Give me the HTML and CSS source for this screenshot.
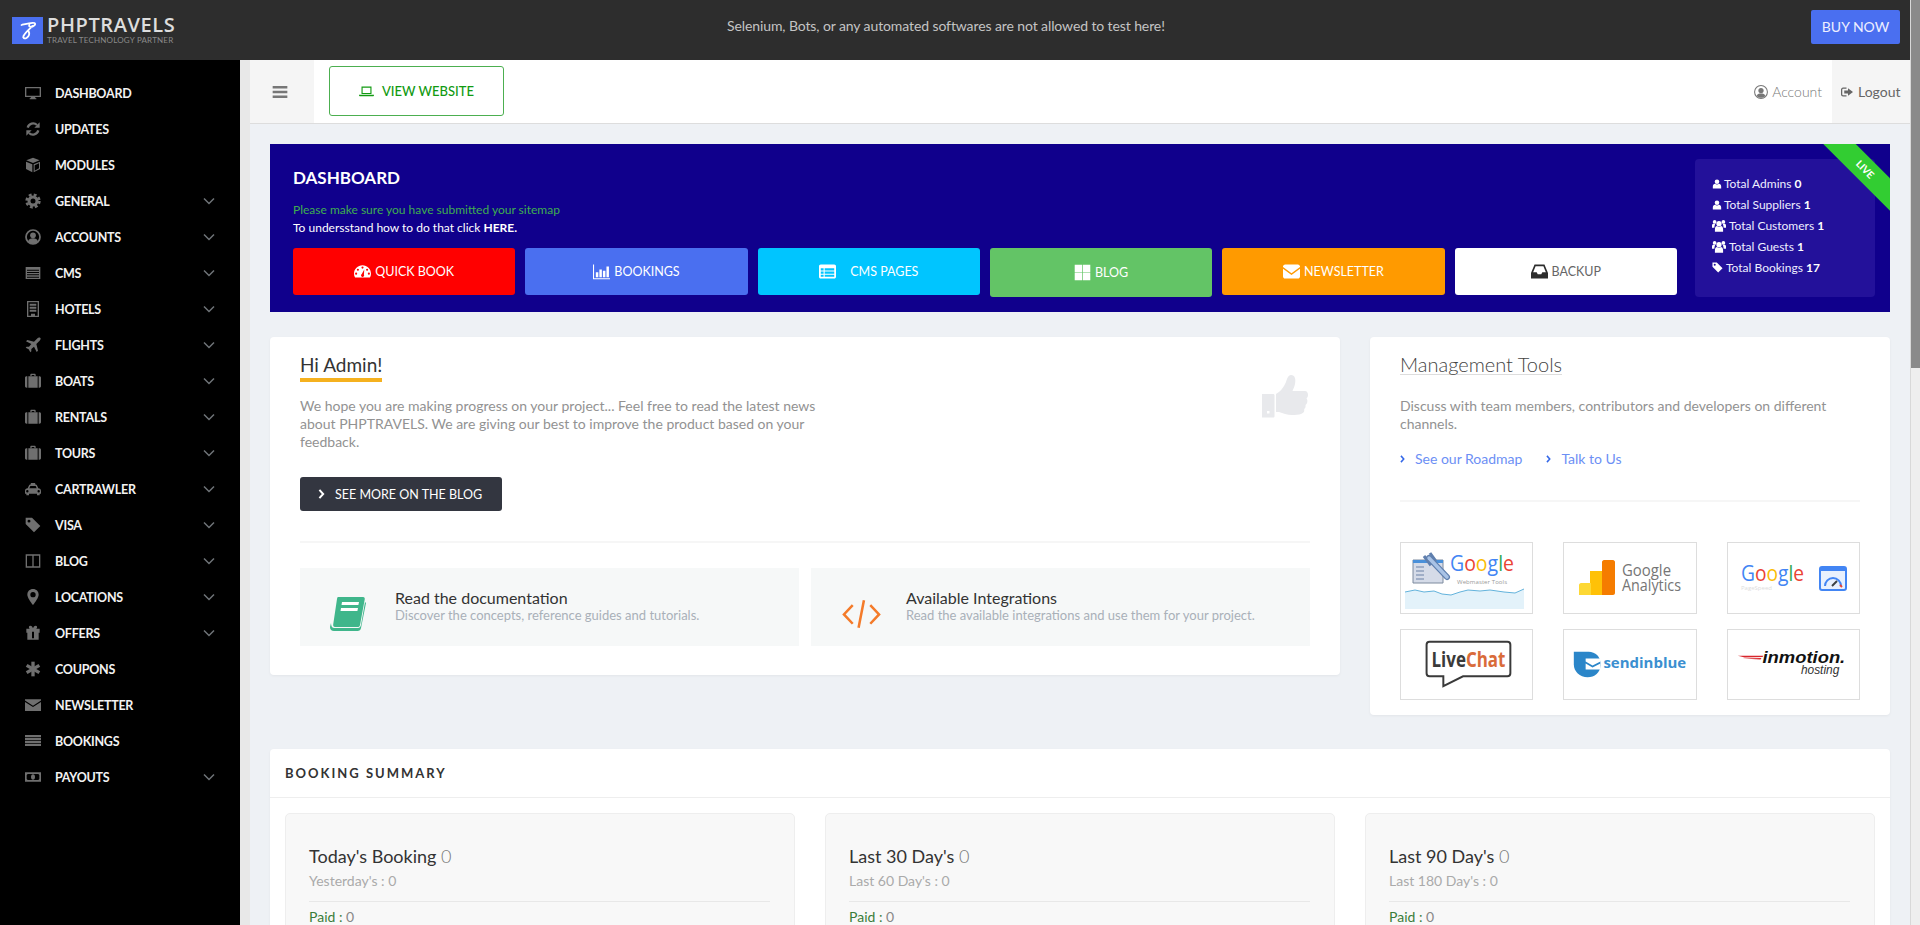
FILE: index.html
```html
<!DOCTYPE html>
<html lang="en">
<head>
    <meta charset="UTF-8">
    <title>Dashboard</title>
    <link rel="stylesheet" href="styles.css">
</head>
<body>
<svg class="sprite" xmlns="http://www.w3.org/2000/svg">
    <symbol id="i-desktop" viewBox="0 0 24 24"><path fill-rule="evenodd" d="M0 3h24v15H0zM2 5v11h20V5z"/><path d="M9 18h6l1 2H8zM7 20h10v1.500H7z"/></symbol>
    <symbol id="i-refresh" viewBox="0 0 24 24"><path fill="none" stroke="currentColor" stroke-width="3.400" d="M4 10a8.500 8.500 0 0 1 14-4M20 14a8.500 8.500 0 0 1-14 4"/><path d="M22 2v8h-8zM2 22v-8h8z"/></symbol>
    <symbol id="i-cube" viewBox="0 0 24 24"><path d="M12 1l10 4-10 4L2 5zM1.500 7l9.500 4v12l-9.500-5zM22.500 7v11L13 23V11z"/><path d="M14.500 12.500l6.500-3v7.500l-6.500 3.500z" fill="#000"/></symbol>
    <symbol id="i-cog" viewBox="0 0 24 24"><circle cx="12" cy="12" r="9.500" fill="none" stroke="currentColor" stroke-width="4" stroke-dasharray="4.200 3.260"/><circle cx="12" cy="12" r="6" fill="none" stroke="currentColor" stroke-width="4.500"/></symbol>
    <symbol id="i-user-circle" viewBox="0 0 24 24"><circle cx="12" cy="12" r="10.500" fill="none" stroke="currentColor" stroke-width="2.600"/><circle cx="12" cy="9.500" r="4.300"/><path d="M4.500 19c1-4 3.500-5 7.500-5s6.500 1 7.500 5c-2 2-4.500 3.300-7.500 3.300S6.500 21 4.500 19z"/></symbol>
    <symbol id="i-list-alt" viewBox="0 0 24 24"><path d="M1 3h22v18H1z"/><path fill="#000" d="M3 7h18v1.500H3zM3 10.500h18V12H3zM3 14h18v1.500H3zM3 17.500h18V19H3z"/></symbol>
    <symbol id="i-building" viewBox="0 0 24 24"><path fill-rule="evenodd" d="M3 0h18v24H3zM5 2v20h4v-3h6v3h4V2z"/><path d="M7 4h10v3H7zM7 8.500h10v3H7zM7 13h10v3H7z"/></symbol>
    <symbol id="i-plane" viewBox="0 0 24 24"><path d="M23 1.500c-1.200-1.200-3.500-.4-5 1.100L13.500 7 3.500 4.500 1.500 6.500 9.500 10.500 6 14.500H2.500L1 16l4.500 2.500L8 23l1.500-1.500V18l4-3.500 4 8 2-2-2.500-10 4.500-4.500c1.500-1.500 2.700-3.300 1.500-4.500z"/></symbol>
    <symbol id="i-suitcase" viewBox="0 0 24 24"><path fill-rule="evenodd" d="M8 5V2.500C8 1.700 8.700 1 9.500 1h5c.8 0 1.500.7 1.500 1.500V5h-2V3h-4v2z"/><path d="M5 5h14v17H5zM0 7c0-1 1-2 2.500-2H3.500v17H2.500C1 22 0 21 0 20zM24 7c0-1-1-2-2.500-2h-1v17h1c1.500 0 2.500-1 2.500-2z"/></symbol>
    <symbol id="i-taxi" viewBox="0 0 24 24"><path fill-rule="evenodd" d="M9 3h6l1 2.500h1.500L20 11c2.500.5 4 1.500 4 4v4h-2v2.500h-4V19H6v2.500H2V19H0v-4c0-2.500 1.500-3.500 4-4l2.500-5.500H8zM8 7.500L6.500 11h11L16 7.500zM3.500 13.500a1.800 1.800 0 1 0 0 3.600 1.800 1.800 0 0 0 0-3.600zM20.500 13.500a1.800 1.800 0 1 0 0 3.600 1.800 1.800 0 0 0 0-3.600z"/></symbol>
    <symbol id="i-tag" viewBox="0 0 24 24"><path fill-rule="evenodd" d="M1 1h9.500L23 13.500 13.500 23 1 10.500zM6 4a2.200 2.200 0 1 0 0 4.400A2.200 2.200 0 0 0 6 4z"/></symbol>
    <symbol id="i-columns" viewBox="0 0 24 24"><path fill-rule="evenodd" d="M1 2h22v20H1zM3 4v16h8V4zM13 4v16h8V4z"/></symbol>
    <symbol id="i-marker" viewBox="0 0 24 24"><path fill-rule="evenodd" d="M12 0c5 0 8.500 3.500 8.500 8.500 0 4-5 11-8.500 15.500C8.500 19.500 3.500 12.500 3.500 8.500 3.500 3.500 7 0 12 0zm0 4.500a4 4 0 1 0 0 8 4 4 0 0 0 0-8z"/></symbol>
    <symbol id="i-gift" viewBox="0 0 24 24"><path fill-rule="evenodd" d="M8 1c2 0 3.500 2 4 4 .5-2 2-4 4-4 2.500 0 3 3 1 4.500h5v6h-1.500V22H3.500V11.500H2v-6h5C5 4 5.500 1 8 1zm2.500 9v10h3V10z"/></symbol>
    <symbol id="i-asterisk" viewBox="0 0 24 24"><path d="M9.500 1h5v22h-5z"/><path d="M9.500 1h5v22h-5z" transform="rotate(60 12 12)"/><path d="M9.500 1h5v22h-5z" transform="rotate(120 12 12)"/></symbol>
    <symbol id="i-envelope" viewBox="0 0 24 24"><path d="M0 3.500h24v1.800L12 13 0 5.300zM0 7.500l12 7.500 12-7.500V21H0z"/></symbol>
    <symbol id="i-list" viewBox="0 0 24 24"><path d="M0 3h24v3.200H0zM0 7.400h24v3.200H0zM0 11.800h24V15H0zM0 16.200h24v3.200H0z"/></symbol>
    <symbol id="i-money" viewBox="0 0 24 24"><path fill-rule="evenodd" d="M0 5h24v14H0zM4 7.500L2.500 9v6L4 16.500h16L21.500 15V9L20 7.500z"/><path d="M12 8c2 0 3 1.800 3 4s-1 4-3 4-3-1.800-3-4 1-4 3-4z"/></symbol>
    <symbol id="i-chevron-down" viewBox="0 0 12 8"><path fill="none" stroke="currentColor" stroke-width="1.500" d="M1 1.500l5 5 5-5"/></symbol>
    <symbol id="i-chevron-right" viewBox="0 0 8 12"><path fill="none" stroke="currentColor" stroke-width="2.400" d="M1.500 1l4.500 5-4.500 5"/></symbol>
    <symbol id="i-bars" viewBox="0 0 24 24"><path d="M1 3h22v3.600H1zM1 10.200h22v3.600H1zM1 17.400h22V21H1z"/></symbol>
    <symbol id="i-laptop" viewBox="0 0 24 24"><path fill-rule="evenodd" d="M4 4h16v12H4zM5.800 5.800v8.400h12.400V5.800z"/><path d="M0 17h24v1.500l-1 1H1l-1-1z"/></symbol>
    <symbol id="i-dashboard" viewBox="0 0 24 24"><path fill-rule="evenodd" d="M12 3c6.600 0 12 5 12 12 0 2-.5 4-1.500 5.500h-21C.5 19 0 17 0 15 0 8 5.400 3 12 3zM12 5a1.500 1.500 0 1 0 0 3 1.500 1.500 0 0 0 0-3zM5.500 8a1.500 1.500 0 1 0 0 3 1.500 1.500 0 0 0 0-3zM18.500 8a1.500 1.500 0 1 0 0 3 1.500 1.500 0 0 0 0-3zM3 13.500a1.500 1.500 0 1 0 0 3 1.500 1.500 0 0 0 0-3zM21 13.500a1.500 1.500 0 1 0 0 3 1.500 1.500 0 0 0 0-3zM14.500 9L11 15.500a2.200 2.200 0 1 0 3 .8z"/></symbol>
    <symbol id="i-chart" viewBox="0 0 24 24"><path d="M0 2h1.500v19.500H24V23H0zM4 13h3.500v7H4zM9 9h3.500v11H9zM14 11h3.500v9H14zM19 5h3.500v15H19z"/></symbol>
    <symbol id="i-table" viewBox="0 0 24 24"><path fill-rule="evenodd" d="M2.500 2h19C23 2 24 3 24 4.500v15c0 1.500-1 2.500-2.500 2.500h-19C1 22 0 21 0 19.500v-15C0 3 1 2 2.500 2zM2.500 7.500v3h4v-3zM8 7.500v3h13.500v-3zM2.500 12v3h4v-3zM8 12v3h13.500v-3zM2.500 16.500v3h4v-3zM8 16.500v3h13.500v-3z"/></symbol>
    <symbol id="i-grid" viewBox="0 0 24 24"><path d="M1 1h10.500v10.500H1zM12.500 1H23v10.500H12.500zM1 12.500h10.500V23H1zM12.500 12.500H23V23H12.500z"/></symbol>
    <symbol id="i-mail-box" viewBox="0 0 24 24"><path d="M3 2h18c1.500 0 3 1.500 3 3v.5l-12 9-12-9V5c0-1.500 1.500-3 3-3zM0 8l12 9 12-9v11c0 1.500-1.500 3-3 3H3c-1.500 0-3-1.500-3-3z"/></symbol>
    <symbol id="i-inbox" viewBox="0 0 24 24"><path fill-rule="evenodd" d="M5 2h14l5 12v8H0v-8zM6.500 4.500L3 13h5l1.500 3h5L16 13h5l-3.500-8.500z"/></symbol>
    <symbol id="i-user" viewBox="0 0 24 24"><circle cx="12" cy="6.500" r="5.500"/><path d="M2 23v-5c0-4 2.500-6.500 5.500-6.500 1 1 2.700 1.800 4.500 1.800s3.500-.8 4.500-1.800c3 0 5.500 2.500 5.500 6.500v5z"/></symbol>
    <symbol id="i-users" viewBox="0 0 24 24"><circle cx="12" cy="8" r="4.500"/><circle cx="4.500" cy="5" r="3.200"/><circle cx="19.500" cy="5" r="3.200"/><path d="M5 22v-5c0-3 2-5 3.500-5 1 .8 2.200 1.300 3.500 1.300s2.500-.5 3.500-1.300c1.500 0 3.500 2 3.500 5v5zM0 15v-4c0-1.500 1-3 2-3 1 .6 2 .8 3.500.6C5 10 4.500 11 4 15zM24 15v-4c0-1.500-1-3-2-3-1 .6-2 .8-3.500.6.500 1.400 1 2.400 1.500 6.400z"/></symbol>
    <symbol id="i-sign-out" viewBox="0 0 24 24"><path d="M4 3h7v2.500H4.500c-1 0-2 1-2 2v9c0 1 1 2 2 2H11V21H4c-2 0-4-2-4-4V7c0-2 2-4 4-4z"/><path d="M14 4.500L24 12l-10 7.500V15H6.500V9H14z"/></symbol>
    <symbol id="i-user-o" viewBox="0 0 24 24"><circle cx="12" cy="12" r="11" fill="none" stroke="currentColor" stroke-width="1.800"/><circle cx="12" cy="9.500" r="4.500"/><path d="M4.500 19c1-3.500 3.500-4.500 7.500-4.500s6.500 1 7.500 4.500c-2 2-4.500 3-7.500 3s-5.500-1-7.500-3z"/></symbol>
    <symbol id="i-thumb" viewBox="0 0 46 44"><path d="M0 19h11c1 0 1.500.5 1.500 1.500V41c0 1-.5 1.500-1.500 1.500H0z"/><path fill="#fff" d="M5 36h2.500v2.500H5z"/><path d="M14 19c4-2 8-7 10-12 1-3 2-7 5-7 4 0 5 4 4 9-.5 3-2 5-2.500 7H43c2 0 3 2 3 4s-1 3-1.500 3.500c.8 1 1 2 .8 3.500-.2 1.500-1 2.300-1.800 3 .3 1.500 0 3-1.300 4 .3 2-.2 4-3.200 5-2 .7-6 1-9 1-5 0-9-1.500-13-3H14z"/></symbol>
</svg>

<div class="screen">
    <div class="window">
        <div class="topbar">
            <div class="brand">
                <div class="brand-mark">
                    <svg viewBox="0 0 30 27"><path fill="none" stroke="#fff" stroke-width="1.800" stroke-linecap="round" d="M9 8c4-1 10-3 13-2 2 1-1 4-4 4-1 0-2-1-1-2M20 9c-2 2-7 6-9 10-1 2 1 3 3 2 3-2 3-5 2-7"/></svg>
                </div>
                <div class="brand-text">
                    <div class="brand-name">PHPTRAVELS</div>
                    <div class="brand-sub">TRAVEL TECHNOLOGY PARTNER</div>
                </div>
            </div>
            <div class="notice">Selenium, Bots, or any automated softwares are not allowed to test here!</div>
            <a class="buy-btn">BUY NOW</a>
        </div>

        <div class="layout">
            <ul class="sidebar">
                <li><svg class="side-ico"><use href="#i-desktop"/></svg><span>DASHBOARD</span></li>
                <li><svg class="side-ico"><use href="#i-refresh"/></svg><span>UPDATES</span></li>
                <li><svg class="side-ico"><use href="#i-cube"/></svg><span>MODULES</span></li>
                <li><svg class="side-ico"><use href="#i-cog"/></svg><span>GENERAL</span><svg class="side-arrow"><use href="#i-chevron-down"/></svg></li>
                <li><svg class="side-ico"><use href="#i-user-circle"/></svg><span>ACCOUNTS</span><svg class="side-arrow"><use href="#i-chevron-down"/></svg></li>
                <li><svg class="side-ico"><use href="#i-list-alt"/></svg><span>CMS</span><svg class="side-arrow"><use href="#i-chevron-down"/></svg></li>
                <li><svg class="side-ico"><use href="#i-building"/></svg><span>HOTELS</span><svg class="side-arrow"><use href="#i-chevron-down"/></svg></li>
                <li><svg class="side-ico"><use href="#i-plane"/></svg><span>FLIGHTS</span><svg class="side-arrow"><use href="#i-chevron-down"/></svg></li>
                <li><svg class="side-ico"><use href="#i-suitcase"/></svg><span>BOATS</span><svg class="side-arrow"><use href="#i-chevron-down"/></svg></li>
                <li><svg class="side-ico"><use href="#i-suitcase"/></svg><span>RENTALS</span><svg class="side-arrow"><use href="#i-chevron-down"/></svg></li>
                <li><svg class="side-ico"><use href="#i-suitcase"/></svg><span>TOURS</span><svg class="side-arrow"><use href="#i-chevron-down"/></svg></li>
                <li><svg class="side-ico"><use href="#i-taxi"/></svg><span>CARTRAWLER</span><svg class="side-arrow"><use href="#i-chevron-down"/></svg></li>
                <li><svg class="side-ico"><use href="#i-tag"/></svg><span>VISA</span><svg class="side-arrow"><use href="#i-chevron-down"/></svg></li>
                <li><svg class="side-ico"><use href="#i-columns"/></svg><span>BLOG</span><svg class="side-arrow"><use href="#i-chevron-down"/></svg></li>
                <li><svg class="side-ico"><use href="#i-marker"/></svg><span>LOCATIONS</span><svg class="side-arrow"><use href="#i-chevron-down"/></svg></li>
                <li><svg class="side-ico"><use href="#i-gift"/></svg><span>OFFERS</span><svg class="side-arrow"><use href="#i-chevron-down"/></svg></li>
                <li><svg class="side-ico"><use href="#i-asterisk"/></svg><span>COUPONS</span></li>
                <li><svg class="side-ico"><use href="#i-envelope"/></svg><span>NEWSLETTER</span></li>
                <li><svg class="side-ico"><use href="#i-list"/></svg><span>BOOKINGS</span></li>
                <li><svg class="side-ico"><use href="#i-money"/></svg><span>PAYOUTS</span><svg class="side-arrow"><use href="#i-chevron-down"/></svg></li>
            </ul>

            <div class="main">
                <div class="header">
                    <a class="toggle"><svg><use href="#i-bars"/></svg></a>
                    <a class="view-btn"><svg><use href="#i-laptop"/></svg>VIEW WEBSITE</a>
                    <a class="account"><svg><use href="#i-user-o"/></svg>Account</a>
                    <a class="logout"><svg><use href="#i-sign-out"/></svg>Logout</a>
                </div>

                <div class="content">
                    <div class="banner">
                        <div class="banner-left">
                            <h2>DASHBOARD</h2>
                            <p class="sitemap">Please make sure you have submitted your sitemap</p>
                            <p class="sitemap-how">To undersstand how to do that click <b>HERE.</b></p>
                            <div class="quick">
                                <a class="quick-btn red"><svg><use href="#i-dashboard"/></svg>QUICK BOOK</a>
                                <a class="quick-btn blue"><svg><use href="#i-chart"/></svg>BOOKINGS</a>
                                <a class="quick-btn cyan"><svg class="wide"><use href="#i-table"/></svg>CMS PAGES</a>
                                <a class="quick-btn green"><svg><use href="#i-grid"/></svg>BLOG</a>
                                <a class="quick-btn orange"><svg><use href="#i-mail-box"/></svg>NEWSLETTER</a>
                                <a class="quick-btn white"><svg><use href="#i-inbox"/></svg>BACKUP</a>
                            </div>
                        </div>
                        <div class="totals">
                            <div><svg><use href="#i-user"/></svg>Total Admins <b>0</b></div>
                            <div><svg><use href="#i-user"/></svg>Total Suppliers <b>1</b></div>
                            <div><svg class="wide"><use href="#i-users"/></svg>Total Customers <b>1</b></div>
                            <div><svg class="wide"><use href="#i-users"/></svg>Total Guests <b>1</b></div>
                            <div><svg class="tag"><use href="#i-tag"/></svg>Total Bookings <b>17</b></div>
                        </div>
                        <div class="ribbon"><span>LIVE</span></div>
                    </div>

                    <div class="cards">
                        <div class="card hello">
                            <div class="hello-top">
                                <div>
                                    <h3 class="hello-title">Hi Admin!</h3>
                                    <p class="muted">We hope you are making progress on your project... Feel free to read the latest news<br>about PHPTRAVELS. We are giving our best to improve the product based on your<br>feedback.</p>
                                    <a class="blog-btn"><svg><use href="#i-chevron-right"/></svg>SEE MORE ON THE BLOG</a>
                                </div>
                                <svg class="thumb"><use href="#i-thumb"/></svg>
                            </div>
                            <div class="rule hello-rule"></div>
                            <div class="docs">
                                <div class="doc">
                                    <svg class="doc-ico" viewBox="0 0 36 34"><path fill="#3fb68b" d="M8 0h25c1.500 0 2 1 1.700 2.500L30 28c-.3 1.500-1 2-2.500 2H5c-1.500 0-2-1-1.800-2.500L7 2c.2-1.300.5-2 1-2z"/><path fill="#3fb68b" d="M35 5l1 1-5 25c-.3 1.800-1.500 3-3.500 3H4c-2.500 0-4-1.500-4-4l1-4c0 3 1 5 3.500 5H28c1.500 0 2.500-1 3-3z"/><path fill="#fff" d="M12 5h17l-.6 3H11.500zM11 11h17l-.6 3H10.500z"/></svg>
                                    <div class="doc-text">
                                        <div class="doc-title">Read the documentation</div>
                                        <div class="doc-sub">Discover the concepts, reference guides and tutorials.</div>
                                    </div>
                                </div>
                                <div class="doc">
                                    <svg class="doc-ico code" viewBox="0 0 40 30"><path fill="none" stroke="#f47b2a" stroke-width="2.600" d="M11 6L2 15.500 11 25M29 6l9 9.500L29 25M22.500 1L17 29"/></svg>
                                    <div class="doc-text">
                                        <div class="doc-title">Available Integrations</div>
                                        <div class="doc-sub">Read the available integrations and use them for your project.</div>
                                    </div>
                                </div>
                            </div>
                        </div>

                        <div class="card tools">
                            <h3 class="tools-title">Management Tools</h3>
                            <p class="muted">Discuss with team members, contributors and developers on different channels.</p>
                            <div class="tool-links">
                                <a><svg><use href="#i-chevron-right"/></svg>See our Roadmap</a>
                                <a><svg><use href="#i-chevron-right"/></svg>Talk to Us</a>
                            </div>
                            <div class="rule tools-rule"></div>
                            <div class="logos">
                                <div class="logo">
                                    <svg viewBox="0 0 131 70">
                                        <path fill="#e3f2fa" d="M4 49l10-2 9 2 10-1 8 3 9 1 9-3 8-2 12 1 10-1 14 2 11 1 9-4 V66 H4z"/>
                                        <path fill="none" stroke="#63b3dc" d="M4 49l10-2 9 2 10-1 8 3 9 1 9-3 8-2 12 1 10-1 14 2 11 1 9-4"/>
                                        <path fill="#d5dbe8" stroke="#7c8a9e" d="M12 17h30v23H12z"/>
                                        <path fill="#4a90d9" d="M12 17h30v3H12z"/>
                                        <path fill="none" stroke="#8fa0bc" stroke-width="1.500" d="M15 24h8M15 28h8M15 32h8M15 36h8"/>
                                        <path fill="none" stroke="#5f7fae" stroke-width="6" stroke-linecap="round" d="M28 15L46 34"/>
                                        <path fill="none" stroke="#5f7fae" stroke-width="3" d="M23 13l6 8 5-4-5-7"/>
                                        <path fill="none" stroke="#a9c3e6" stroke-width="3.500" stroke-linecap="round" d="M28 15L46 34"/>
                                        <text class="g-text" x="49" y="28" font-size="21" textLength="64" lengthAdjust="spacingAndGlyphs"><tspan fill="#4285f4">G</tspan><tspan fill="#ea4335">o</tspan><tspan fill="#fbbc05">o</tspan><tspan fill="#4285f4">g</tspan><tspan fill="#34a853">l</tspan><tspan fill="#ea4335">e</tspan></text>
                                        <text class="g-text" x="56" y="41" font-size="6" fill="#999" textLength="50">Webmaster Tools</text>
                                    </svg>
                                </div>
                                <div class="logo">
                                    <svg viewBox="0 0 132 70">
                                        <path fill="#ffc107" d="M26 28h14v24H26z"/>
                                        <path fill="#fdd835" d="M17 40h10v12H15V42c0-1 1-2 2-2z"/>
                                        <path fill="#f57c00" d="M38 19c0-1 1-2 2-2h9c1 0 2 1 2 2v31c0 1-1 2-2 2H38z"/>
                                        <text class="g-text" x="58" y="33" font-size="16" fill="#757575" textLength="49" lengthAdjust="spacingAndGlyphs">Google</text>
                                        <text class="g-text" x="58" y="48" font-size="16" fill="#757575" textLength="59" lengthAdjust="spacingAndGlyphs">Analytics</text>
                                    </svg>
                                </div>
                                <div class="logo">
                                    <svg viewBox="0 0 131 70">
                                        <text class="g-text" x="13" y="38" font-size="22" textLength="63" lengthAdjust="spacingAndGlyphs"><tspan fill="#4285f4">G</tspan><tspan fill="#ea4335">o</tspan><tspan fill="#fbbc05">o</tspan><tspan fill="#4285f4">g</tspan><tspan fill="#34a853">l</tspan><tspan fill="#ea4335">e</tspan></text>
                                        <text class="g-text" x="13" y="47" font-size="6" fill="#ddd">PageSpeed</text>
                                        <rect x="92" y="24" width="26" height="23" rx="2" fill="#e8f0fd" stroke="#4285f4" stroke-width="2"/>
                                        <path fill="#4285f4" d="M92 24h26v4H92z"/>
                                        <path fill="none" stroke="#4285f4" stroke-width="2" d="M97 43a8 8 0 0 1 16 0"/>
                                        <path stroke="#ea4335" stroke-width="2" d="M112 42l2 2"/>
                                        <path stroke="#3c4043" stroke-width="2" d="M104 43l5-5"/>
                                    </svg>
                                </div>
                                <div class="logo">
                                    <svg viewBox="0 0 131 70">
                                        <path fill="#fff" stroke="#3a3a3a" stroke-width="2" d="M28 12h79c2 0 3 1 3 3v29c0 2-1 3-3 3H62l-20 10v-10H28c-2 0-3-1-3-3V15c0-2 1-3 3-3z"/>
                                        <text class="lc-text" x="30" y="38" font-size="22" fill="#3a3a3a" textLength="75" lengthAdjust="spacingAndGlyphs">Live<tspan fill="#d96b3a">Chat</tspan></text>
                                    </svg>
                                </div>
                                <div class="logo">
                                    <svg viewBox="0 0 132 70">
                                        <path fill="#2b86c9" d="M9 22h15c7 0 12 5 12 12v2c0 7-6 12-13 12-8 0-14-6-14-13z"/>
                                        <path fill="#fff" d="M21 29h15v3l-8 4-7-4zM21 34l7 4 8-4v6H21z"/>
                                        <text class="sb-text" x="39" y="39" font-size="15" fill="#3b8fd0" textLength="84" lengthAdjust="spacingAndGlyphs">sendinblue</text>
                                    </svg>
                                </div>
                                <div class="logo">
                                    <svg viewBox="0 0 131 70">
                                        <path fill="#d8262c" d="M9 26h26l-1 1.500 -18 .5zM14 29l19-.5-1 1.500z"/>
                                        <text class="im-text" x="34" y="33" font-size="17" fill="#111" textLength="84" lengthAdjust="spacingAndGlyphs">inmotion.</text>
                                        <text class="im-sub" x="73" y="45" font-size="13" fill="#333" textLength="39" lengthAdjust="spacingAndGlyphs">hosting</text>
                                    </svg>
                                </div>
                            </div>
                        </div>
                    </div>

                    <div class="card summary">
                        <div class="summary-head">BOOKING SUMMARY</div>
                        <div class="summary-grid">
                            <div class="stat">
                                <div class="stat-title">Today's Booking <span>0</span></div>
                                <div class="stat-sub">Yesterday's : 0</div>
                                <div class="stat-rule"></div>
                                <div class="stat-row"><b>Paid :</b> 0</div>
                            </div>
                            <div class="stat">
                                <div class="stat-title">Last 30 Day's <span>0</span></div>
                                <div class="stat-sub">Last 60 Day's : 0</div>
                                <div class="stat-rule"></div>
                                <div class="stat-row"><b>Paid :</b> 0</div>
                            </div>
                            <div class="stat">
                                <div class="stat-title">Last 90 Day's <span>0</span></div>
                                <div class="stat-sub">Last 180 Day's : 0</div>
                                <div class="stat-rule"></div>
                                <div class="stat-row"><b>Paid :</b> 0</div>
                            </div>
                        </div>
                    </div>
                </div>
            </div>
        </div>
    </div>
    <div class="scrollbar"><div class="scrollbar-thumb"></div></div>
</div>
</body>
</html>
```

FILE: styles.css
```css
html, body {
    height: 100%;
    margin: 0;
    overflow: hidden;
}

body {
    font-family: Lato, "Open Sans", sans-serif;
    font-size: 13px;
    color: #555;
    background-color: #eef1f5;
}

a {
    cursor: pointer;
}

h2, h3, p, ul {
    margin: 0;
    padding: 0;
}

.sprite {
    display: none;
}

.screen {
    display: flex;
    height: 925px;
    overflow: hidden;
}

.window {
    flex: 1;
    min-width: 0;
    display: flex;
    flex-direction: column;
}

.scrollbar {
    width: 9px;
    flex: none;
    border-left: 1px solid #d8d8d8;
    background-color: #eeeeee;
}

.scrollbar-thumb {
    height: 368px;
    background-color: #8a8a8a;
}

/* top bar */
.topbar {
    height: 60px;
    flex: none;
    display: flex;
    align-items: center;
    background-color: #2d2d2d;
    padding: 0 10px 0 12px;
    position: relative;
}

.brand {
    display: flex;
    align-items: center;
    gap: 4px;
}

.brand-mark {
    width: 31px;
    height: 27px;
    background-color: #4a6ff0;
}

.brand-mark svg {
    display: block;
    width: 100%;
    height: 100%;
}

.brand-name {
    font-family: "Open Sans", sans-serif;
    font-size: 20px;
    font-weight: 600;
    line-height: 20px;
    letter-spacing: 0.6px;
    color: #dddddd;
}

.brand-sub {
    font-size: 8px;
    line-height: 10px;
    color: #8a8a8a;
    letter-spacing: 0.2px;
}

.notice {
    position: absolute;
    left: 727px;
    top: 17px;
    font-size: 14px;
    line-height: 18px;
    letter-spacing: -0.1px;
    color: #c4c4c4;
}

.buy-btn {
    margin-left: auto;
    width: 89px;
    height: 34px;
    line-height: 34px;
    text-align: center;
    color: #eef;
    font-size: 14px;
    background-color: #4a6ff0;
    border-radius: 2px;
    margin-top: -6px;
}

.layout {
    flex: 1;
    display: flex;
    min-height: 0;
}

/* sidebar */
.sidebar {
    width: 240px;
    flex: none;
    box-sizing: border-box;
    padding-top: 15px;
    background-color: #000;
    list-style: none;
}

.sidebar li {
    display: flex;
    align-items: center;
    height: 36px;
    padding: 0 25px;
    font-size: 12.500px;
    font-weight: 700;
    letter-spacing: -0.25px;
    color: #f2f2f2;
}

.side-ico {
    width: 16px;
    height: 16px;
    margin-right: 14px;
    color: #6f6f6f;
    fill: currentColor;
    flex: none;
}

.side-arrow {
    width: 12px;
    height: 8px;
    margin-left: auto;
    color: #6f7478;
}

/* page */
.main {
    flex: 1;
    min-width: 0;
    border-left: 10px solid #e8e8e8;
}

.header {
    height: 63px;
    display: flex;
    align-items: center;
    background-color: #fff;
    border-bottom: 1px solid #dddddd;
}

.toggle {
    width: 64px;
    height: 100%;
    box-sizing: border-box;
    padding-right: 4px;
    display: flex;
    align-items: center;
    justify-content: center;
    background-color: #f5f5f5;
    color: #777;
    fill: currentColor;
}

.toggle svg {
    width: 16px;
    height: 16px;
}

.view-btn {
    width: 175px;
    height: 50px;
    margin: -1px 0 0 15px;
    box-sizing: border-box;
    border: 1px solid #4caf50;
    border-radius: 3px;
    display: flex;
    align-items: center;
    justify-content: center;
    gap: 8px;
    font-size: 13px;
    font-weight: 500;
    color: #119a11;
    fill: currentColor;
}

.view-btn svg {
    width: 15px;
    height: 15px;
}

.account {
    margin-left: auto;
    display: flex;
    align-items: center;
    gap: 4px;
    padding-right: 10px;
    font-size: 14px;
    font-weight: 300;
    color: #777;
    fill: currentColor;
}

.account svg {
    width: 14px;
    height: 14px;
}

.logout {
    width: 78px;
    height: 100%;
    box-sizing: border-box;
    padding-left: 9px;
    display: flex;
    align-items: center;
    gap: 5px;
    background-color: #f5f5f5;
    font-size: 14px;
    color: #666;
    fill: currentColor;
}

.logout svg {
    width: 12px;
    height: 12px;
}

.content {
    padding: 20px 20px 0;
}

/* banner */
.banner {
    height: 168px;
    box-sizing: border-box;
    padding: 15px 15px 15px 23px;
    display: flex;
    gap: 18px;
    background-color: #10008c;
    position: relative;
    overflow: hidden;
}

.banner-left {
    flex: 1;
    min-width: 0;
    padding-top: 7px;
}

.banner h2 {
    font-size: 17px;
    line-height: 24px;
    font-weight: 700;
    color: #fff;
}

.sitemap {
    margin-top: 11px;
    font-size: 12px;
    line-height: 18px;
    color: #3fae4f;
}

.sitemap-how {
    font-size: 12px;
    line-height: 18px;
    color: #fff;
}

.quick {
    display: flex;
    gap: 10px;
    margin-top: 11px;
}

.quick-btn {
    flex: 1;
    height: 47px;
    display: flex;
    align-items: center;
    justify-content: center;
    gap: 4px;
    border-radius: 3px;
    font-size: 12.500px;
    color: #fff;
    fill: currentColor;
}

.quick-btn svg {
    width: 17px;
    height: 17px;
}

.quick-btn svg.wide {
    margin-right: 10px;
}

.red { background-color: #ff0000; }
.blue { background-color: #4a6ff0; }
.cyan { background-color: #00c5ff; }
.green { background-color: #63c466; height: 49px; }
.orange { background-color: #ff9a00; }
.white { background-color: #fff; color: #666; fill: #2d2d2d; }

.totals {
    width: 180px;
    flex: none;
    box-sizing: border-box;
    height: 138px;
    padding: 14px 0 0 17px;
    background-color: #23119a;
    border-radius: 4px;
    font-size: 12px;
    color: #eeeeff;
    fill: #fff;
}

.totals div {
    display: flex;
    align-items: center;
    height: 21px;
    white-space: pre;
}

.totals svg {
    width: 10px;
    height: 12px;
    margin-right: 2px;
}

.totals svg.wide {
    width: 14px;
    height: 14px;
    margin-right: 3px;
}

.totals svg.tag {
    width: 11px;
    height: 11px;
    margin-right: 3px;
}

.totals b {
    color: #fff;
}

.ribbon {
    position: absolute;
    top: 14px;
    right: -35px;
    width: 120px;
    height: 23px;
    line-height: 23px;
    text-align: center;
    transform: rotate(45deg);
    background-color: #32cd32;
    font-size: 10px;
    font-weight: 700;
    color: #fff;
}

/* cards */
.cards {
    display: flex;
    align-items: flex-start;
    gap: 30px;
    margin-top: 25px;
}

.card {
    background-color: #fff;
    border-radius: 4px;
    box-shadow: 0 1px 3px rgba(0, 0, 0, 0.05);
}

.muted {
    line-height: 18px;
    font-size: 14px;
    font-weight: 400;
    color: #929292;
}

.rule {
    height: 2px;
    background-color: #f6f6f6;
}

.hello {
    width: 1070px;
    flex: none;
    box-sizing: border-box;
    height: 338px;
    padding: 16px 30px 0;
}

.hello-top {
    display: flex;
    justify-content: space-between;
}

.hello-title {
    display: table;
    font-size: 19px;
    line-height: 23px;
    font-weight: 400;
    color: #333;
    padding-bottom: 2px;
    border-bottom: 4px solid #f5b11f;
    margin-bottom: 15px;
}

.blog-btn {
    width: 202px;
    height: 34px;
    margin-top: 26px;
    display: flex;
    align-items: center;
    box-sizing: border-box;
    padding-left: 18px;
    background-color: #333640;
    border-radius: 3px;
    font-size: 12.500px;
    color: #fff;
}

.blog-btn svg {
    width: 7px;
    height: 10px;
    margin-right: 10px;
}

.thumb {
    width: 46px;
    height: 44px;
    margin: 22px 2px 0 0;
    fill: #e8e9ec;
}

.hello-rule {
    margin-top: 30px;
}

.docs {
    display: flex;
    gap: 12px;
    margin-top: 25px;
}

.doc {
    flex: 1;
    height: 78px;
    display: flex;
    align-items: center;
    background-color: #f6f8f8;
}

.doc-ico {
    width: 36px;
    height: 34px;
    margin: 14px 29px 0 30px;
    flex: none;
}

.doc-ico.code {
    width: 39px;
    height: 30px;
    margin: 14px 25px 0 31px;
}

.doc-text {
    padding-bottom: 4px;
}

.doc-title {
    font-size: 16px;
    line-height: 20px;
    color: #333;
}

.doc-sub {
    font-size: 13px;
    line-height: 15px;
    color: #a9b0b8;
}

.tools {
    width: 520px;
    flex: none;
    box-sizing: border-box;
    height: 378px;
    padding: 17px 30px 15px;
}

.tools-title {
    display: table;
    font-size: 20px;
    line-height: 20px;
    font-weight: 300;
    color: #444;
    border-bottom: 1px solid #dddddd;
    margin-bottom: 22px;
}

.tool-links {
    display: flex;
    gap: 24px;
    margin-top: 17px;
    font-size: 14px;
    line-height: 18px;
    color: #6c8ff5;
}

.tool-links a {
    display: flex;
    align-items: center;
}

.tool-links svg {
    width: 5px;
    height: 8px;
    margin-right: 10px;
    color: #3367e8;
}

.tools-rule {
    margin-top: 32px;
}

.logos {
    display: grid;
    grid-template-columns: 133px 134px 133px;
    grid-template-rows: 72px 71px;
    justify-content: space-between;
    row-gap: 15px;
    margin-top: 40px;
}

.logo {
    border: 1px solid #dddddd;
    min-width: 0;
    min-height: 0;
}

.logo svg {
    display: block;
    width: 100%;
    height: 100%;
}

.g-text {
    font-family: "Open Sans", sans-serif;
}

.lc-text {
    font-family: "Open Sans", sans-serif;
    font-weight: 700;
}

.sb-text {
    font-family: "Open Sans", sans-serif;
    font-weight: 700;
}

.im-text {
    font-family: "Liberation Sans", sans-serif;
    font-weight: 700;
    font-style: italic;
}

.im-sub {
    font-family: "Liberation Sans", sans-serif;
    font-style: italic;
}

/* booking summary */
.summary {
    margin-top: 34px;
    border-radius: 4px 4px 0 0;
    height: 400px;
}

.summary-head {
    height: 48px;
    line-height: 48px;
    padding-left: 15px;
    border-bottom: 1px solid #eeeeee;
    font-size: 13px;
    font-weight: 700;
    letter-spacing: 2px;
    color: #333;
}

.summary-grid {
    display: grid;
    grid-template-columns: repeat(3, 1fr);
    gap: 30px;
    padding: 15px;
}

.stat {
    height: 300px;
    box-sizing: border-box;
    padding: 31px 24px 0 23px;
    background-color: #f8f8f8;
    border: 1px solid #eeeeee;
    border-radius: 5px;
}

.stat-title {
    font-size: 18px;
    line-height: 22px;
    color: #333;
}

.stat-title span {
    font-weight: 300;
    color: #777;
}

.stat-sub {
    margin-top: 5px;
    font-size: 14px;
    line-height: 18px;
    color: #aaaaaa;
}

.stat-rule {
    height: 1px;
    margin-top: 11px;
    background-color: #e8e8e8;
}

.stat-row {
    margin-top: 6px;
    font-size: 14px;
    line-height: 18px;
    color: #888;
}

.stat-row b {
    font-weight: 400;
    color: #3a7d3a;
}
```
